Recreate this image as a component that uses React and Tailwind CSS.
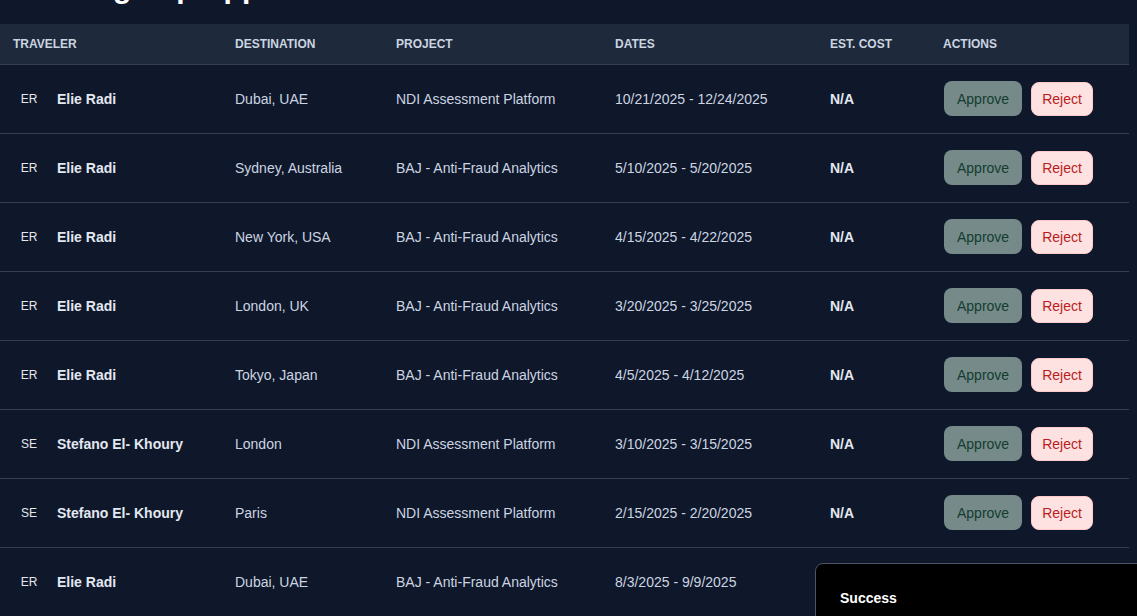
const trips = [
  { initials: 'ER', name: 'Elie Radi', destination: 'Dubai, UAE', project: 'NDI Assessment Platform', dates: '10/21/2025 - 12/24/2025' },
  { initials: 'ER', name: 'Elie Radi', destination: 'Sydney, Australia', project: 'BAJ - Anti-Fraud Analytics', dates: '5/10/2025 - 5/20/2025' },
  { initials: 'ER', name: 'Elie Radi', destination: 'New York, USA', project: 'BAJ - Anti-Fraud Analytics', dates: '4/15/2025 - 4/22/2025' },
  { initials: 'ER', name: 'Elie Radi', destination: 'London, UK', project: 'BAJ - Anti-Fraud Analytics', dates: '3/20/2025 - 3/25/2025' },
  { initials: 'ER', name: 'Elie Radi', destination: 'Tokyo, Japan', project: 'BAJ - Anti-Fraud Analytics', dates: '4/5/2025 - 4/12/2025' },
  { initials: 'SE', name: 'Stefano El- Khoury', destination: 'London', project: 'NDI Assessment Platform', dates: '3/10/2025 - 3/15/2025' },
  { initials: 'SE', name: 'Stefano El- Khoury', destination: 'Paris', project: 'NDI Assessment Platform', dates: '2/15/2025 - 2/20/2025' },
  { initials: 'ER', name: 'Elie Radi', destination: 'Dubai, UAE', project: 'BAJ - Anti-Fraud Analytics', dates: '8/3/2025 - 9/9/2025' },
]

const headers = ['Traveler', 'Destination', 'Project', 'Dates', 'Est. Cost', 'Actions']

export default function App() {
  return (
    <div className="min-h-screen overflow-hidden bg-[#0f172a] font-['Liberation_Sans',Arial,sans-serif]">
      {/* page is scrolled: only the heading's descenders still show */}
      <h1 className="-mt-[30px] mb-[18px] pl-[13px] text-3xl font-bold text-white">Pending Trip Approvals</h1>

      <table className="w-[1129px] table-fixed border-collapse text-left">
        <colgroup>
          <col className="w-[222px]" />
          <col className="w-[161px]" />
          <col className="w-[219px]" />
          <col className="w-[215px]" />
          <col className="w-[113px]" />
          <col className="w-[199px]" />
        </colgroup>
        <thead>
          <tr className="border-b border-[#334155] bg-[#1e293b]">
            {headers.map((h) => (
              <th key={h} className="h-10 px-[13px] text-xs font-bold uppercase text-[#cbd5e1]">
                {h}
              </th>
            ))}
          </tr>
        </thead>
        <tbody>
          {trips.map((t, i) => (
            <tr key={i} className="h-[69px] border-b border-[#334155] text-sm text-[#cbd5e1]">
              <td className="px-[13px]">
                <div className="flex items-center gap-3">
                  <div className="flex h-8 w-8 shrink-0 items-center justify-center rounded-full text-xs text-[#e5e7eb]">
                    {t.initials}
                  </div>
                  <span className="font-bold text-[#e2e8f0]">{t.name}</span>
                </div>
              </td>
              <td className="px-[13px]">{t.destination}</td>
              <td className="px-[13px]">{t.project}</td>
              <td className="px-[13px]">{t.dates}</td>
              <td className="px-[13px] font-bold text-[#e2e8f0]">N/A</td>
              <td className="px-[13px]">
                <div className="flex items-center gap-[9px] pl-px">
                  <button disabled className="h-[35px] rounded-lg bg-[#dcfce7] px-[13px] text-sm text-[#166534] opacity-50">
                    Approve
                  </button>
                  <button className="h-[34px] rounded-lg border border-[#fecaca] bg-[#fee2e2] px-[10px] text-sm text-[#b91c1c]">
                    Reject
                  </button>
                </div>
              </td>
            </tr>
          ))}
        </tbody>
      </table>

      {/* toast */}
      <div className="fixed left-[815px] top-[563px] w-[360px] rounded-lg border border-[#4b5563] bg-black px-6 pt-6 pb-[60px]">
        <p className="text-sm font-bold text-white">Success</p>
      </div>
    </div>
  )
}
